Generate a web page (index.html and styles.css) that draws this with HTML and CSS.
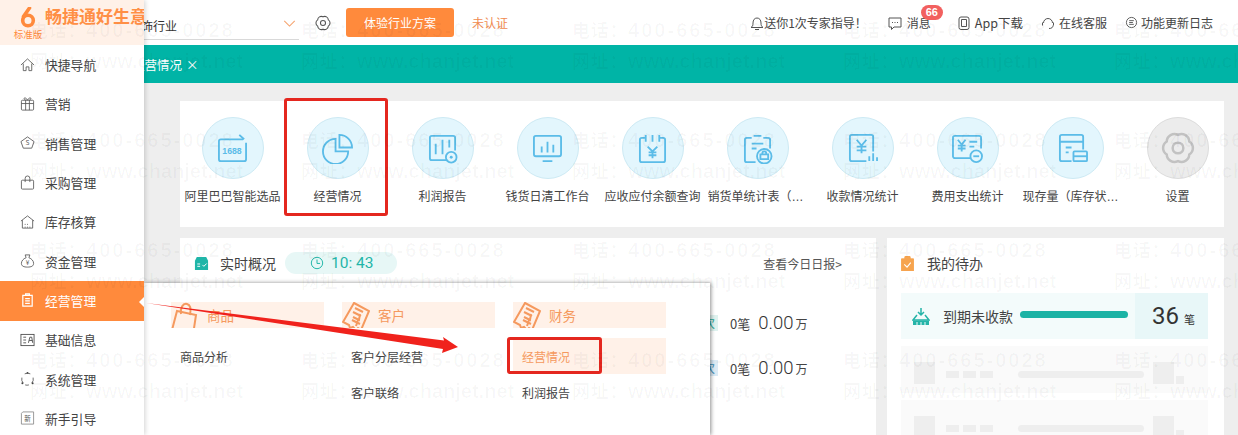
FILE: index.html
```html
<!DOCTYPE html>
<html lang="zh-CN">
<head>
<meta charset="utf-8">
<title>畅捷通好生意</title>
<link rel="stylesheet" href="styles.css">
</head>
<body>
<div class="app">
  <aside class="sidebar">
    <div class="brand">
      <div class="brand-logo">
        <svg class="brand-mark" viewBox="0 0 18 21"><path d="M10.500 1L4.500 9.500"/><circle cx="9" cy="13.500" r="5.300"/></svg>
        <span class="brand-edition">标准版</span>
      </div>
      <span class="brand-name">畅捷通好生意</span>
    </div>
    <nav class="nav">
      <a class="nav-item"><svg class="nav-icon" viewBox="0 0 16 16"><path d="M1 8l7-6.500L15 8M3.500 6.500V14h3v-4h3v4h3V6.500"/></svg>快捷导航</a>
      <a class="nav-item"><svg class="nav-icon" viewBox="0 0 16 16"><rect x="1.500" y="4" width="13" height="10.500" rx="1"/><path d="M1.500 7.500h13M6 4v10.500M10 4v10.500M6 4C4 3 4 1 5.500 1.500 7 2 7.500 3 8 4c.5-1 1-2 2.500-2.500C12 1 12 3 10 4"/></svg>营销</a>
      <a class="nav-item"><svg class="nav-icon" viewBox="0 0 16 16"><path d="M8 1.500l7 5-2.500 7h-9L1 6.500z"/><text class="nav-glyph" x="8" y="10.500">S</text></svg>销售管理</a>
      <a class="nav-item"><svg class="nav-icon" viewBox="0 0 16 16"><rect x="1.500" y="5" width="13" height="9.500" rx="1"/><path d="M5.500 7V3a2.500 2.500 0 0 1 5 0v4"/></svg>采购管理</a>
      <a class="nav-item"><svg class="nav-icon" viewBox="0 0 16 16"><path d="M1 7l7-5.500L15 7M2.500 6v8.500h11V6M5.500 14v-1M5.500 11v-1M8 14v-1M8 11v-1M10.500 14v-1"/></svg>库存核算</a>
      <a class="nav-item"><svg class="nav-icon" viewBox="0 0 16 16"><path d="M5.500 1.500h5L9.500 4.500c3 1 5 3.500 5 6 0 3-2.500 4-6.500 4s-6.500-1-6.500-4c0-2.500 2-5 5-6z"/><text class="nav-glyph" x="8" y="12.500">¥</text></svg>资金管理</a>
      <a class="nav-item nav-item-active"><svg class="nav-icon" viewBox="0 0 16 16"><path d="M3 3h10v11.500H3zM6 1.500h4V3H6zM5.500 6.500h5M5.500 9h5M5.500 11.500h5"/></svg>经营管理</a>
      <a class="nav-item"><svg class="nav-icon nav-icon-card" viewBox="0 0 16 16"><rect x="1" y="2" width="14" height="12"/><path d="M3.500 5h3M3.500 8h3M3.500 11h3M9 11l1.500-6h2l1 6M9.800 8.500h3.400"/></svg>基础信息</a>
      <a class="nav-item"><svg class="nav-icon" viewBox="0 0 16 16"><path d="M5 2.500a6.500 6.500 0 0 1 6 0M14 6.500a6.500 6.500 0 0 1-1.500 6M9.500 14.300a6.500 6.500 0 0 1-4 0M3.500 12.500A6.500 6.500 0 0 1 2 6.500"/><circle class="nav-dot" cx="8" cy="1.500" r="1"/><circle class="nav-dot" cx="2.500" cy="12.500" r="1"/><circle class="nav-dot" cx="13.500" cy="12.500" r="1"/></svg>系统管理</a>
      <a class="nav-item"><svg class="nav-icon nav-icon-soft" viewBox="0 0 16 16"><path d="M3 1.500h11.500v13H1.500V3z"/><text class="nav-glyph" x="8" y="11">新</text></svg>新手引导</a>
    </nav>
  </aside>

  <div class="main">
    <header class="topbar">
      <div class="select"><span class="select-text">饰行业</span><svg class="chevron" viewBox="0 0 14 8"><path d="M1 1l6 6 6-6"/></svg></div>
      <svg class="top-gear" viewBox="0 0 32 32"><path d="M16 5A6.500 6.500 0 0 1 25.500 10.500A6.500 6.500 0 0 1 25.500 21.500A6.500 6.500 0 0 1 16 27A6.500 6.500 0 0 1 6.500 21.500A6.500 6.500 0 0 1 6.500 10.500A6.500 6.500 0 0 1 16 5z"/><circle cx="16" cy="16" r="4.500"/></svg>
      <button class="try-btn">体验行业方案</button>
      <span class="verify">未认证</span>
      <div class="top-links">
        <span class="top-link top-link-bell"><svg class="top-icon" viewBox="0 0 14 14"><path d="M1 11.500h12c-1.500-1-2-2-2-4.500 0-3-1.500-5-4-5S3 4 3 7c0 2.500-.5 3.500-2 4.500zM5 13.500h4"/></svg>送你1次专家指导！</span>
        <span class="top-link top-link-msg"><svg class="top-icon" viewBox="0 0 14 14"><path d="M1 2h12v9H6l-2.500 2.500V11H1z"/><path d="M4 6.500h1M6.500 6.500h1M9 6.500h1"/></svg>消息<span class="badge">66</span></span>
        <span class="top-link top-link-app"><svg class="top-icon" viewBox="0 0 14 14"><rect x="2" y="1" width="10" height="12.500" rx="2"/><path d="M4.500 3.500h5v7h-5z"/></svg>App下载</span>
        <span class="top-link"><svg class="top-icon" viewBox="0 0 14 14"><path d="M2.500 7a4.500 4.500 0 0 1 9 0M1.500 6.500v3M12.500 6.500v3M12 9.500c0 2-1.500 3-4 3"/></svg>在线客服</span>
        <span class="top-link top-link-log"><svg class="top-icon" viewBox="0 0 14 14"><circle cx="7" cy="7" r="5.500"/><path d="M4.500 5h5M4.500 7h4M4.500 9h5"/></svg>功能更新日志</span>
      </div>
    </header>

    <div class="tabbar"><span class="tab">经营情况<span class="tab-close">×</span></span></div>

    <div class="content">
      <section class="shortcuts">
        <div class="shortcut"><span class="disc"><svg class="disc-icon" viewBox="0 0 32 32"><path d="M27 6.500H4a2 2 0 0 0-2 2V27a2 2 0 0 0 2 2h24a2 2 0 0 0 2-2V10"/><path d="M23 2l5 4.500"/><text class="disc-text" x="15.500" y="22">1688</text></svg></span><span class="shortcut-label">阿里巴巴智能选品</span></div>
        <div class="shortcut"><span class="disc"><svg class="disc-icon" viewBox="0 0 32 32"><path d="M14 6a13 13 0 1 0 13 13H14z"/><path d="M18 2a13 13 0 0 1 13 13H18z"/></svg></span><span class="shortcut-label">经营情况</span></div>
        <div class="shortcut"><span class="disc"><svg class="disc-icon" viewBox="0 0 32 32"><path d="M21 28H5a2 2 0 0 1-2-2V5a2 2 0 0 1 2-2h22a2 2 0 0 1 2 2v13"/><path d="M9 11v11M16 7v15M23 7v8"/><circle cx="25" cy="25" r="5.500"/><circle class="disc-fill" cx="25" cy="25" r="1.500"/></svg></span><span class="shortcut-label">利润报告</span></div>
        <div class="shortcut"><span class="disc"><svg class="disc-icon" viewBox="0 0 32 32"><rect x="2" y="3" width="28" height="21" rx="2"/><path d="M16 9v11M10 14v6M22 12v8M11 29h10"/></svg></span><span class="shortcut-label">钱货日清工作台</span></div>
        <div class="shortcut"><span class="disc"><svg class="disc-icon" viewBox="0 0 32 32"><path d="M9 5H5a2 2 0 0 0-2 2v21a2 2 0 0 0 2 2h22a2 2 0 0 0 2-2V7a2 2 0 0 0-2-2h-4M9 2v7M16 2v7M23 2v7"/><path d="M11 14l5 5 5-5M16 19v7M12 20h8M12 23h8"/></svg></span><span class="shortcut-label">应收应付余额查询</span></div>
        <div class="shortcut"><span class="disc"><svg class="disc-icon" viewBox="0 0 32 32"><path d="M10 5H5a2 2 0 0 0-2 2v21a2 2 0 0 0 2 2h9M22 5h5a2 2 0 0 1 2 2v9M12 3h8M10 11h12M10 16h5"/><circle cx="23" cy="24" r="7.500"/><path d="M19 27v-5h8v5zM21 22v-1a2 2 0 0 1 4 0v1"/></svg></span><span class="shortcut-label">销货单统计表（库存）</span></div>
        <div class="shortcut"><span class="disc"><svg class="disc-icon" viewBox="0 0 32 32"><path d="M20 29H5a2 2 0 0 1-2-2V4a2 2 0 0 1 2-2h20a2 2 0 0 1 2 2v15"/><path d="M10 7l5 6 5-6M15 13v8M10 14h10M10 18h10M23 29v-5M27 29v-8M31 29v-4"/></svg></span><span class="shortcut-label">收款情况统计</span></div>
        <div class="shortcut"><span class="disc"><svg class="disc-icon" viewBox="0 0 32 32"><path d="M19 26H3a2 2 0 0 1-2-2V5a2 2 0 0 1 2-2h25a2 2 0 0 1 2 2v11"/><path d="M6 7l4 5 4-5M10 12v7M6 13h8M6 16h8M18 9h8M18 14h5"/><circle cx="25" cy="24" r="6"/><path d="M22 24h6"/></svg></span><span class="shortcut-label">费用支出统计</span></div>
        <div class="shortcut"><span class="disc"><svg class="disc-icon" viewBox="0 0 32 32"><path d="M15 29H5a2 2 0 0 1-2-2V4a2 2 0 0 1 2-2h20a2 2 0 0 1 2 2v13M3 9h24M9 15h6M9 20h3"/><rect x="17" y="19" width="14" height="10" rx="1"/><path d="M17 24h14"/></svg></span><span class="shortcut-label">现存量（库存状况）</span></div>
        <div class="shortcut"><span class="disc disc-grey"><svg class="disc-icon" viewBox="0 0 32 32"><path d="M16 5A6.500 6.500 0 0 1 25.500 10.500A6.500 6.500 0 0 1 25.500 21.500A6.500 6.500 0 0 1 16 27A6.500 6.500 0 0 1 6.500 21.500A6.500 6.500 0 0 1 6.500 10.500A6.500 6.500 0 0 1 16 5z"/><circle cx="16" cy="16" r="4.500"/></svg></span><span class="shortcut-label">设置</span></div>
      </section>

      <div class="lower">
        <section class="overview">
          <div class="overview-head">
            <svg class="head-icon" viewBox="0 0 16 16"><path class="head-teal" d="M3 1h10l2 4v10H1V5z"/><path class="head-line" d="M3.500 8.500h3M3.500 11h3M9 9.500l1.500 1.500 3-3"/></svg>
            <span class="head-title">实时概况</span>
            <span class="clock-pill"><svg class="clock" viewBox="0 0 16 16"><circle cx="8" cy="8" r="6.500"/><path d="M8 4v4.500h3.500"/></svg>10: 43</span>
            <a class="daily-link">查看今日日报&gt;</a>
          </div>
          <div class="stats">
            <div class="stat"><span class="stat-tag">次</span><span class="stat-count">0笔</span><span class="stat-amount">0.00</span><span class="stat-unit">万</span></div>
            <div class="stat"><span class="stat-tag stat-tag-blue">次</span><span class="stat-count">0笔</span><span class="stat-amount">0.00</span><span class="stat-unit">万</span></div>
          </div>
        </section>

        <section class="todo">
          <div class="todo-head">
            <svg class="todo-icon" viewBox="0 0 14 16"><path d="M0.500 3h13v13H.5zM4 3V2a3 3 0 0 1 6 0v1" /><path class="todo-check" d="M3.500 9l3 3 4-5"/></svg>
            <span class="head-title">我的待办</span>
          </div>
          <div class="todo-row">
            <svg class="due-icon" viewBox="0 0 18 18"><path d="M5 8L1 13h16l-4-5M9 1v7M6 5l3 3 3-3"/><path class="due-base" d="M1 13.500h16v4.500H1z"/><path class="due-slots" d="M5 15v3M9 15v3M13 15v3"/></svg>
            <span class="due-label">到期未收款</span>
            <span class="due-bar"></span>
            <span class="due-total"><b class="due-num">36</b><span class="due-unit">笔</span></span>
          </div>
          <div class="ghost-row"><i class="ghost-box"></i><i class="ghost-word"></i><i class="ghost-word"></i><i class="ghost-word"></i><i class="ghost-bar"></i><i class="ghost-box ghost-box-end"></i><i class="ghost-tail"></i></div>
          <div class="ghost-row"><i class="ghost-box"></i><i class="ghost-word"></i><i class="ghost-word"></i><i class="ghost-word"></i><i class="ghost-bar"></i><i class="ghost-box ghost-box-end"></i><i class="ghost-tail"></i></div>
        </section>
      </div>
    </div>
  </div>

  <div class="flyout">
    <div class="fly-col">
      <div class="fly-title"><svg class="fly-icon" viewBox="0 0 28 32"><path d="M6 9L25 13 22 33 1 28z"/><path d="M10 12c-1-6 2-11 6-10s4 6 3 11"/></svg>商品</div>
      <a class="fly-link">商品分析</a>
    </div>
    <div class="fly-col">
      <div class="fly-title"><svg class="fly-icon" viewBox="0 0 28 32"><path d="M12 1l15 8-8 19-3-2-2 2-3-3-3 1-1-3-6-3z"/><path d="M13 6l8 4M11 10l8 4M11 15l6 3 1-6M16 18l-2 6M10 18l8 4"/></svg>客户</div>
      <a class="fly-link">客户分层经营</a>
      <a class="fly-link">客户联络</a>
    </div>
    <div class="fly-col">
      <div class="fly-title"><svg class="fly-icon" viewBox="0 0 28 32"><path d="M12 1l15 8-8 19-3-2-2 2-3-3-3 1-1-3-6-3z"/><path d="M13 6l8 4M11 10l8 4M11 15l6 3 1-6M16 18l-2 6M10 18l8 4"/></svg>财务</div>
      <a class="fly-link fly-link-active">经营情况</a>
      <a class="fly-link">利润报告</a>
    </div>
  </div>

  <span class="nav-caret"></span>
  <svg class="annotation-arrow" viewBox="0 0 1238 435"><polygon points="146,303 444,340.500 443,337 458,347 442,353 443,349"/></svg>
  <span class="mark mark-top"></span>
  <span class="mark mark-menu"></span>

  <div class="watermarks">
    <div class="wm"><span class="wm-phone"><span class="wm-cjk">电话：</span>400-665-0028</span><span><span class="wm-cjk">网址：</span>www.chanjet.net</span></div>
    <div class="wm"><span class="wm-phone"><span class="wm-cjk">电话：</span>400-665-0028</span><span><span class="wm-cjk">网址：</span>www.chanjet.net</span></div>
    <div class="wm"><span class="wm-phone"><span class="wm-cjk">电话：</span>400-665-0028</span><span><span class="wm-cjk">网址：</span>www.chanjet.net</span></div>
    <div class="wm"><span class="wm-phone"><span class="wm-cjk">电话：</span>400-665-0028</span><span><span class="wm-cjk">网址：</span>www.chanjet.net</span></div>
    <div class="wm"><span class="wm-phone"><span class="wm-cjk">电话：</span>400-665-0028</span><span><span class="wm-cjk">网址：</span>www.chanjet.net</span></div>
    <div class="wm"><span class="wm-phone"><span class="wm-cjk">电话：</span>400-665-0028</span><span><span class="wm-cjk">网址：</span>www.chanjet.net</span></div>
    <div class="wm"><span class="wm-phone"><span class="wm-cjk">电话：</span>400-665-0028</span><span><span class="wm-cjk">网址：</span>www.chanjet.net</span></div>
    <div class="wm"><span class="wm-phone"><span class="wm-cjk">电话：</span>400-665-0028</span><span><span class="wm-cjk">网址：</span>www.chanjet.net</span></div>
    <div class="wm"><span class="wm-phone"><span class="wm-cjk">电话：</span>400-665-0028</span><span><span class="wm-cjk">网址：</span>www.chanjet.net</span></div>
    <div class="wm"><span class="wm-phone"><span class="wm-cjk">电话：</span>400-665-0028</span><span><span class="wm-cjk">网址：</span>www.chanjet.net</span></div>
    <div class="wm"><span class="wm-phone"><span class="wm-cjk">电话：</span>400-665-0028</span><span><span class="wm-cjk">网址：</span>www.chanjet.net</span></div>
    <div class="wm"><span class="wm-phone"><span class="wm-cjk">电话：</span>400-665-0028</span><span><span class="wm-cjk">网址：</span>www.chanjet.net</span></div>
    <div class="wm"><span class="wm-phone"><span class="wm-cjk">电话：</span>400-665-0028</span><span><span class="wm-cjk">网址：</span>www.chanjet.net</span></div>
    <div class="wm"><span class="wm-phone"><span class="wm-cjk">电话：</span>400-665-0028</span><span><span class="wm-cjk">网址：</span>www.chanjet.net</span></div>
    <div class="wm"><span class="wm-phone"><span class="wm-cjk">电话：</span>400-665-0028</span><span><span class="wm-cjk">网址：</span>www.chanjet.net</span></div>
    <div class="wm"><span class="wm-phone"><span class="wm-cjk">电话：</span>400-665-0028</span><span><span class="wm-cjk">网址：</span>www.chanjet.net</span></div>
    <div class="wm"><span class="wm-phone"><span class="wm-cjk">电话：</span>400-665-0028</span><span><span class="wm-cjk">网址：</span>www.chanjet.net</span></div>
    <div class="wm"><span class="wm-phone"><span class="wm-cjk">电话：</span>400-665-0028</span><span><span class="wm-cjk">网址：</span>www.chanjet.net</span></div>
    <div class="wm"><span class="wm-phone"><span class="wm-cjk">电话：</span>400-665-0028</span><span><span class="wm-cjk">网址：</span>www.chanjet.net</span></div>
    <div class="wm"><span class="wm-phone"><span class="wm-cjk">电话：</span>400-665-0028</span><span><span class="wm-cjk">网址：</span>www.chanjet.net</span></div>
  </div>
</div>
</body>
</html>
```
FILE: styles.css
```css
* { box-sizing: border-box; }
html, body { margin: 0; padding: 0; background: #fff; }
body { font-family: "Noto Sans CJK SC", "Liberation Sans", sans-serif; font-size: 12px; color: #333; }
.app { position: relative; display: flex; width: 1238px; height: 435px; overflow: hidden; }

/* Sidebar */
.sidebar { position: relative; z-index: 4; flex: 0 0 144px; width: 144px; min-width: 0; background: #fff; box-shadow: 1px 0 5px rgba(0,0,0,.18); }
.brand { display: flex; align-items: center; width: 144px; height: 45px; padding-left: 13px; background: #fff1e8; overflow: hidden; white-space: nowrap; }
.brand-logo { display: flex; flex: 0 0 30px; flex-direction: column; align-items: center; margin-right: 2px; }
.brand-mark { width: 18px; height: 21px; margin-top: 3px; fill: none; stroke: #ff8a3c; stroke-width: 3.600; stroke-linecap: round; }
.brand-edition { font-size: 9.500px; line-height: 13px; color: #ff8a3c; }
.brand-name { flex: none; font-size: 17px; font-weight: 700; color: #ff8f45; margin-top: -14px; }
.nav { padding-top: .5px; }
.nav-item { display: flex; align-items: center; gap: 10px; height: 39.300px; padding-left: 20px; padding-bottom: 1px; font-size: 12.800px; color: #444; }
.nav-icon { width: 15px; height: 16px; flex: none; fill: none; stroke: #555; stroke-width: .9; }
.nav-icon-card { stroke: #444; }
.nav-icon-soft { stroke: #888; }
.nav-glyph { font-size: 7px; text-anchor: middle; fill: #555; stroke: none; }
.nav-dot { fill: #444; stroke: none; }
.nav-item-active { background: #ff8a3c; color: #fff; }
.nav-item-active .nav-icon { stroke: #fff; stroke-width: 1.300; }
.nav-caret { position: absolute; z-index: 5; left: 139px; top: 297px; width: 0; height: 0; border: 5px solid transparent; border-left: 0; border-right-color: #fff; }

/* Top bar */
.main { flex: 1; min-width: 0; display: flex; flex-direction: column; background: #eeeeee; }
.topbar { display: flex; align-items: center; height: 45px; flex: none; background: #fff; overflow: hidden; }
.select { display: flex; align-items: center; justify-content: space-between; width: 155px; height: 28px; margin-top: 6px; border-bottom: 1px solid #d9d9d9; padding-right: 3px; }
.select-text { margin-left: -3px; color: #333; }
.chevron { width: 13px; height: 7px; margin-top: -4px; fill: none; stroke: #f5a36e; stroke-width: 1.200; }
.top-gear { width: 18px; height: 18px; margin-left: 15px; fill: none; stroke: #555; stroke-width: 1.900; }
.try-btn { width: 108px; height: 29px; margin: 0 0 0 14px; padding: 0; border: 0; border-radius: 3px; background: #ff8a3c; color: #fff; font: inherit; font-size: 12px; }
.verify { margin-left: 18px; color: #f08a50; }
.top-links { display: flex; align-items: center; margin-left: auto; padding-right: 25px; }
.top-link { position: relative; display: flex; align-items: center; gap: 4px; margin-left: 18px; color: #444; white-space: nowrap; }
.top-link-bell { gap: 0; }
.top-link-msg { gap: 5px; margin-left: 21px; }
.top-link-app { margin-left: 26px; font-size: 12.500px; }
.top-link-log { gap: 3px; }
.top-link-log .top-icon { width: 13px; height: 13px; }
.top-icon { width: 14px; height: 14px; flex: none; fill: none; stroke: #555; stroke-width: 1; }
.badge { position: absolute; right: -12px; top: -9px; width: 22px; height: 15px; border-radius: 8px; background: #f2605f; color: #fff; font: 700 11px/15px "Liberation Sans", sans-serif; text-align: center; }

/* Tabs */
.tabbar { display: flex; align-items: center; height: 38px; flex: none; background: #00b4a6; color: #fff; overflow: hidden; }
.tab { margin-left: -12px; font-size: 12.500px; white-space: nowrap; }
.tab-close { margin-left: 4px; }

/* Content */
.content { flex: 1; min-height: 0; padding: 18px 14px 0 36px; overflow: hidden; }
.shortcuts { display: grid; grid-template-columns: repeat(10, 105px); height: 126px; background: #fff; padding-top: 16px; overflow: hidden; }
.shortcut { display: flex; flex-direction: column; align-items: center; gap: 9px; }
.disc { display: flex; align-items: center; justify-content: center; width: 62px; height: 62px; border-radius: 50%; background: #e3f6fd; border: 1px solid #cdeaf4; }
.disc-grey { background: #ececec; border-color: #dcdcdc; }
.disc-icon { width: 31px; height: 31px; fill: none; stroke: #5bbce8; stroke-width: 1.900; }
.disc-grey .disc-icon { width: 38px; height: 38px; stroke: #c2c2c2; stroke-width: 2.100; }
.disc-text { font: 700 9px "Liberation Sans", sans-serif; text-anchor: middle; fill: #5bbce8; stroke: none; }
.disc-fill { fill: #5bbce8; stroke: none; }
.shortcut-label { display: block; width: 100px; line-height: 18px; text-align: center; white-space: nowrap; overflow: hidden; text-overflow: ellipsis; color: #444; font-family: "Liberation Sans", "Noto Sans CJK SC", sans-serif; }

.lower { display: flex; gap: 11px; height: 220px; margin-top: 11px; }
.overview { flex: 0 0 696px; background: #fff; }
.overview-head { display: flex; align-items: center; height: 22px; margin-top: 14px; padding: 0 34px 0 14px; }
.head-icon { width: 15px; height: 15px; flex: none; }
.head-teal { fill: #1fb5a8; }
.head-line { fill: none; stroke: #fff; stroke-width: 1; }
.head-title { margin-left: 11px; font-size: 14px; line-height: 20px; color: #444; }
.clock-pill { display: flex; align-items: center; gap: 7px; width: 112px; height: 22px; margin-left: 9px; padding-left: 25px; border-radius: 11px; background: #e7f7f6; color: #1fb5a8; font: 15.500px "Roboto", sans-serif; }
.clock { width: 14px; height: 14px; flex: none; fill: none; stroke: #1fb5a8; stroke-width: 1.100; }
.daily-link { margin-left: auto; color: #555; }
.stats { display: flex; flex-direction: column; gap: 23px; margin-top: 38px; padding-left: 520px; }
.stat { display: flex; align-items: baseline; height: 22px; }
.stat-tag { width: 18px; height: 16px; margin-right: 12px; padding-right: 3px; background: #dff2ef; align-self: center; overflow: hidden; color: #2ba99b; font-size: 12px; line-height: 16px; text-align: right; }
.stat-tag-blue { background: #dbeaf5; color: #3d8fb8; }
.stat-count { font-size: 13px; color: #444; }
.stat-amount { margin-left: 8px; font: 300 18.500px "Roboto", sans-serif; color: #333; }
.stat-unit { margin-left: 2px; font-size: 12px; color: #444; }

.todo { flex: 0 0 337px; background: #fff; padding: 14px 16px 0 14px; }
.todo-head { display: flex; align-items: center; height: 22px; margin-bottom: 19px; }
.todo-head .head-title { margin-left: 13px; }
.todo-icon { width: 13px; height: 15px; flex: none; fill: #f6a44f; stroke: #f6a44f; stroke-width: 1; }
.todo-icon .todo-check { fill: none; stroke: #fff; stroke-width: 1.200; }
.todo-row { display: flex; align-items: center; height: 46px; padding-left: 11px; background: #f3fbfb; }
.due-icon { width: 18px; height: 18px; flex: none; fill: none; stroke: #25b4a8; stroke-width: 1.500; }
.due-icon .due-base { fill: #25b4a8; stroke: none; }
.due-icon .due-slots { stroke: #f3fbfb; stroke-width: 1; }
.due-label { margin-left: 13px; width: 71px; font-size: 14px; color: #444; white-space: nowrap; }
.due-bar { width: 108px; height: 7px; margin: -3px 0 0 6px; border-radius: 4px; background: #1bb3a5; }
.due-total { display: flex; align-items: baseline; justify-content: center; width: 73px; height: 46px; margin-left: 7px; padding: 6px 0 0 4px; background: #e8f7f8; }
.due-num { font: 400 24px/34px "Roboto", sans-serif; color: #333; }
.due-unit { margin-left: 5px; font-size: 11px; }
.ghost-row { display: flex; align-items: flex-start; height: 47px; margin-top: 7px; padding: 16px 0 0 13px; background: #fafafa; }
.ghost-box { width: 21px; height: 22px; background: #eee; }
.ghost-word { width: 13px; height: 7px; margin: 9px 4px 0 0; background: #eee; }
.ghost-box + .ghost-word { margin-left: 11px; }
.ghost-bar { width: 126px; height: 7px; margin: 9px 0 0 21px; border-radius: 4px; background: #eee; }
.ghost-box-end { margin-left: 9px; }
.ghost-tail { width: 8px; height: 8px; margin: 14px 0 0 2px; background: #eee; }

/* Flyout menu */
.flyout { position: absolute; z-index: 3; left: 144px; top: 283px; width: 566px; height: 152px; display: grid; grid-template-columns: repeat(3, 153px); column-gap: 18px; padding: 19px 0 0 27px; background: #fff; box-shadow: 1px 0 4px rgba(0,0,0,.45); }
.fly-col { min-width: 0; }
.fly-title { display: flex; align-items: flex-start; height: 26px; margin-bottom: 10px; background: #fff1e8; color: #f5995e; font-size: 13.500px; line-height: 26px; overflow: hidden; }
.fly-icon { width: 28px; height: 32px; flex: none; margin: 0 8px 0 0; fill: none; stroke: #f5995e; stroke-width: 2; }
.fly-link { display: flex; align-items: center; height: 36px; padding-left: 9px; color: #444; }
.fly-link-active { background: #fff1e8; color: #f5995e; }

/* Annotations */
.annotation-arrow { position: absolute; z-index: 6; left: 0; top: 0; width: 1238px; height: 435px; fill: #f0221c; pointer-events: none; }
.mark { position: absolute; z-index: 6; border: 3px solid #e4271f; border-radius: 3px; pointer-events: none; }
.mark-top { left: 284px; top: 98px; width: 104px; height: 118px; }
.mark-menu { left: 507px; top: 337px; width: 95px; height: 37px; }

/* Watermark */
.watermarks { position: absolute; z-index: 8; left: 30px; top: 15px; display: grid; grid-template-columns: repeat(5, 271px); grid-auto-rows: 110px; pointer-events: none; }
.wm { display: flex; flex-direction: column; font: 700 20px/30px "Liberation Sans", "Noto Sans CJK SC", sans-serif; color: rgba(0,0,0,.03); white-space: nowrap; }
.wm-phone { letter-spacing: 2px; }
.wm-cjk { font-size: 18px; letter-spacing: .7px; }
```
